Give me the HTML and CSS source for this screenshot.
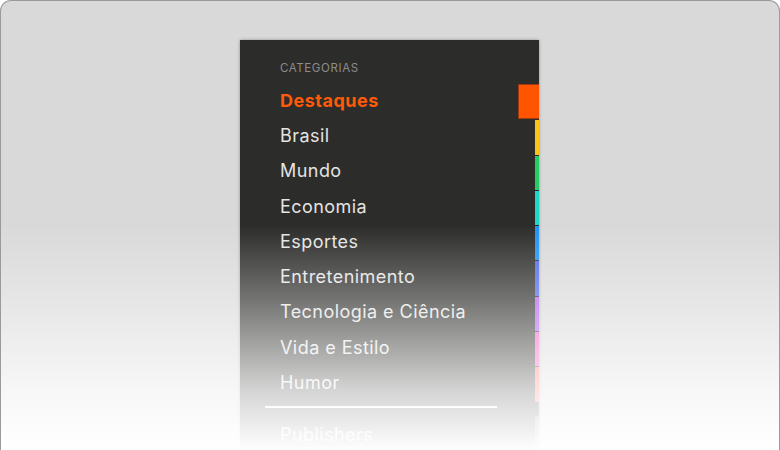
FILE: index.html
```html
<!DOCTYPE html>
<html lang="pt">
<head>
<meta charset="utf-8">
<link rel="stylesheet" href="styles.css">
</head>
<body>
<div class="frame">
  <nav class="panel">
    <div class="heading">CATEGORIAS</div>
    <ul class="list">
      <li class="item active"><span class="label">Destaques</span><span class="tab tab-orange"></span></li>
      <li class="item"><span class="label">Brasil</span><span class="strip c-yellow"></span></li>
      <li class="item"><span class="label">Mundo</span><span class="strip c-green"></span></li>
      <li class="item"><span class="label">Economia</span><span class="strip c-teal"></span></li>
      <li class="item"><span class="label">Esportes</span><span class="strip c-blue"></span></li>
      <li class="item"><span class="label">Entretenimento</span><span class="strip c-indigo"></span></li>
      <li class="item"><span class="label">Tecnologia e Ciência</span><span class="strip c-purple"></span></li>
      <li class="item"><span class="label">Vida e Estilo</span><span class="strip c-pink"></span></li>
      <li class="item"><span class="label">Humor</span><span class="strip c-salmon"></span></li>
    </ul>
    <div class="divider"></div>
    <div class="item extra"><span class="label">Publishers</span><span class="strip c-gray"></span></div>
  </nav>
  <div class="fade"></div>
</div>
</body>
</html>
```
FILE: styles.css
```css
* { box-sizing: border-box; }
html, body { margin: 0; padding: 0; }
body {
  width: 780px;
  height: 450px;
  overflow: hidden;
  background: #ffffff;
  font-family: Inter, "Open Sans", "Liberation Sans", sans-serif;
}
.frame {
  position: relative;
  width: 780px;
  height: 450px;
  border: 1px solid #9a9a9a;
  border-bottom: none;
  border-radius: 11px 11px 0 0;
  background: #d9d9d9;
  display: flex;
  justify-content: center;
  padding-top: 39px;
  padding-right: 1px;
  overflow: hidden;
}
.panel {
  width: 299px;
  height: 430px;
  background: #2c2c2a;
  box-shadow: 0 0 3px rgba(0, 0, 0, 0.35);
  padding-top: 19px;
}
.heading {
  padding-left: 40px;
  padding-top: 1px;
  font-size: 11.5px;
  letter-spacing: 0.6px;
  color: #8c8c8a;
  height: 25px;
  line-height: 16px;
}
.list {
  list-style: none;
  margin: 0;
  padding: 0;
}
.item {
  display: flex;
  align-items: center;
  height: 35.3px;
  padding-left: 40px;
}
.label {
  font-size: 18px;
  color: #e4e4e2;
  letter-spacing: 0.45px;
  padding-bottom: 3px;
}
.active .label {
  color: #ff5a0a;
  font-weight: 700;
  letter-spacing: 0.5px;
}
.tab {
  margin-left: auto;
  width: 21px;
  height: 35px;
  background: #ff5500;
  border: 1px solid #9e3a10;
  border-right: none;
}
.strip {
  margin-left: auto;
  align-self: flex-end;
  width: 4px;
  height: 34.3px;
}
.c-yellow { background: #fcc414; }
.c-green { background: #25cc63; }
.c-teal { background: #1fd6c6; }
.c-blue { background: #1d93f5; }
.c-indigo { background: #4f68e8; }
.c-purple { background: #b05cf0; }
.c-pink { background: #f25cc4; }
.c-salmon { background: #ff6e66; }
.c-gray { background: #7a7a7a; }
.divider {
  height: 2px;
  margin: 4px 42px 0 25px;
  background: #f0f0f0;
}
.extra {
  height: 40px;
  margin-top: 8px;
}
.extra .strip { height: 40px; }
.fade {
  position: absolute;
  left: 0;
  right: 0;
  top: 0;
  bottom: 0;
  pointer-events: none;
  background: linear-gradient(to bottom, rgba(255,255,255,0) 224px, rgba(255,255,255,0.35) 300px, rgba(255,255,255,0.8) 390px, rgba(255,255,255,1) 450px);
}
```
